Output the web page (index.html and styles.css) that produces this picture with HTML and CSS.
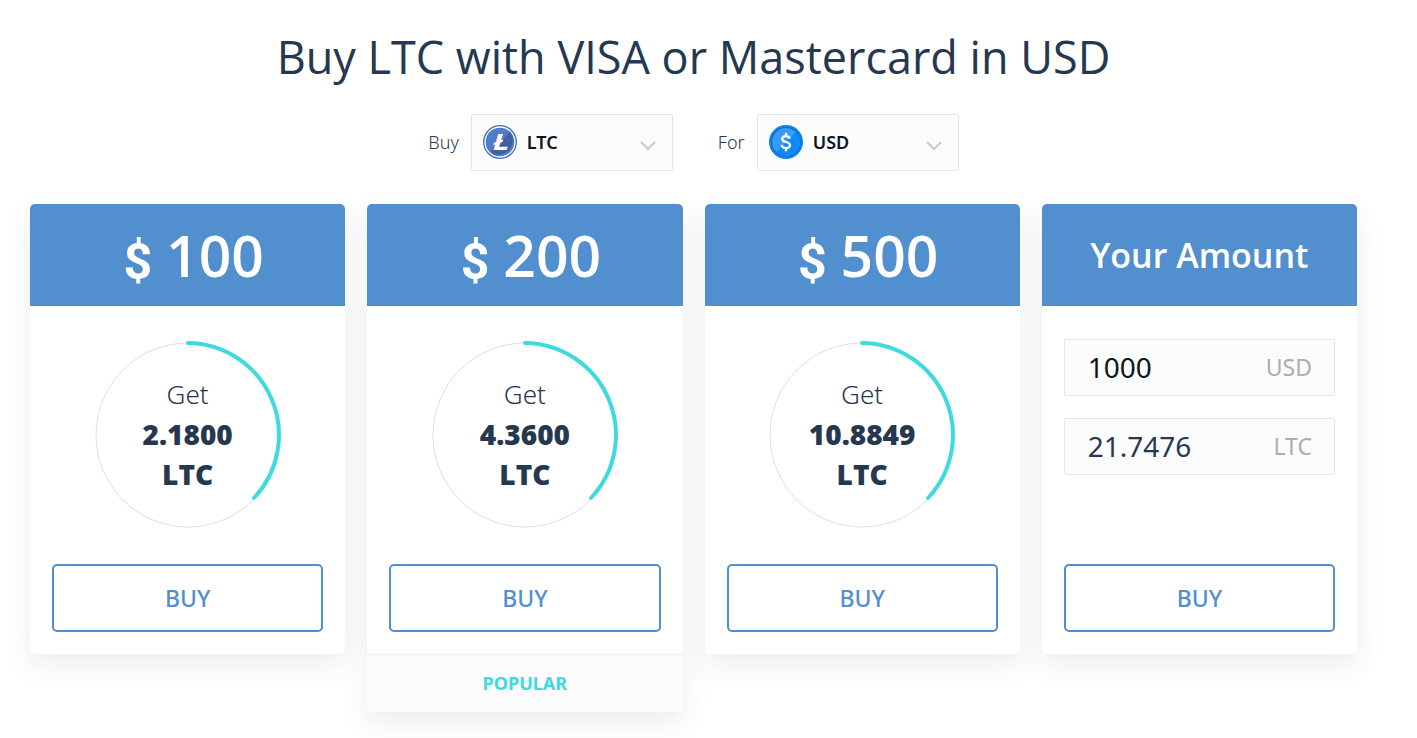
FILE: index.html
```html
<!DOCTYPE html>
<html lang="en">
<head>
    <meta charset="UTF-8">
    <meta name="viewport" content="width=device-width, initial-scale=1.0">
    <title>Buy LTC with VISA or Mastercard in USD</title>
    <link rel="stylesheet" href="styles.css">
</head>
<body>
    <main class="container">
        <h1>Buy LTC with VISA or Mastercard in USD</h1>

        <form class="filters">
            <div class="filter">
                <label for="buy">Buy</label>
                <div class="select-box">
                    <svg class="coin" viewBox="0 0 34 34" aria-hidden="true">
                        <circle cx="17" cy="17" r="17" fill="#466bb5"/>
                        <circle cx="17" cy="17" r="15" fill="#507ccd" stroke="#fff" stroke-width="1.3"/>
                        <path d="M27 7A14.3 14.3 0 0 1 7 27Z" fill="#40609f"/>
                        <path d="M15.200 9h4.800l-1.900 6.200 2.300-.9-.7 2.500-2.300.9-1.200 4h8.500l-.9 3.300H10.600l1.700-5.600-2 .8.7-2.500 2-.8Z" fill="#fff"/>
                    </svg>
                    <select id="buy">
                        <option>LTC</option>
                    </select>
                    <svg class="arrow" viewBox="0 0 16 10" aria-hidden="true">
                        <path d="M1 1 8 8l7-7"/>
                    </svg>
                </div>
            </div>
            <div class="filter">
                <label for="for">For</label>
                <div class="select-box">
                    <svg class="coin" viewBox="0 0 34 34" aria-hidden="true">
                        <circle cx="17" cy="17" r="17" fill="#0e85ec"/>
                        <circle cx="17" cy="17" r="14.500" fill="#369cf8" stroke="#0b6fce" stroke-width="1.200"/>
                        <path d="M27 7A14 14 0 0 1 7 27Z" fill="#118af5"/>
                        <path d="M20.900 13.800c-.5-1.900-2-2.700-3.900-2.700-2.300 0-3.800 1.100-3.800 2.800 0 4.200 7.800 2 7.800 6.200 0 1.900-1.600 3-4 3-2.200 0-3.900-1-4.300-3M17 8v3.200M17 23v3.200" fill="none" stroke="#fff" stroke-width="2.300"/>
                    </svg>
                    <select id="for">
                        <option>USD</option>
                    </select>
                    <svg class="arrow" viewBox="0 0 16 10" aria-hidden="true">
                        <path d="M1 1 8 8l7-7"/>
                    </svg>
                </div>
            </div>
        </form>

        <div class="cards">
            <section class="card">
                <h2 class="card-head"><span class="currency">$</span> 100</h2>
                <div class="card-body">
                    <div class="ring">
                        <svg viewBox="0 0 190 190" aria-hidden="true">
                            <circle class="track" cx="95" cy="95" r="92"/>
                            <path class="progress" d="M95 3A92 92 0 0 1 161 158"/>
                        </svg>
                        <p>Get <b>2.1800<br>LTC</b></p>
                    </div>
                    <button type="button" class="btn">BUY</button>
                </div>
            </section>

            <section class="card">
                <h2 class="card-head"><span class="currency">$</span> 200</h2>
                <div class="card-body">
                    <div class="ring">
                        <svg viewBox="0 0 190 190" aria-hidden="true">
                            <circle class="track" cx="95" cy="95" r="92"/>
                            <path class="progress" d="M95 3A92 92 0 0 1 161 158"/>
                        </svg>
                        <p>Get <b>4.3600<br>LTC</b></p>
                    </div>
                    <button type="button" class="btn">BUY</button>
                </div>
                <div class="card-foot">POPULAR</div>
            </section>

            <section class="card">
                <h2 class="card-head"><span class="currency">$</span> 500</h2>
                <div class="card-body">
                    <div class="ring">
                        <svg viewBox="0 0 190 190" aria-hidden="true">
                            <circle class="track" cx="95" cy="95" r="92"/>
                            <path class="progress" d="M95 3A92 92 0 0 1 161 158"/>
                        </svg>
                        <p>Get <b>10.8849<br>LTC</b></p>
                    </div>
                    <button type="button" class="btn">BUY</button>
                </div>
            </section>

            <section class="card">
                <h2 class="card-head card-head-text">Your Amount</h2>
                <div class="card-body">
                    <div class="amounts">
                        <div class="amount">
                            <input type="text" id="usd" class="amount-edit" value="1000">
                            <label for="usd">USD</label>
                        </div>
                        <div class="amount">
                            <input type="text" id="ltc" value="21.7476" readonly>
                            <label for="ltc">LTC</label>
                        </div>
                    </div>
                    <button type="button" class="btn">BUY</button>
                </div>
            </section>
        </div>
    </main>
</body>
</html>
```

FILE: styles.css
```css
* {
    margin: 0;
    padding: 0;
    box-sizing: border-box;
    font-family: 'Noto Sans', sans-serif;
}

body {
    background: #fff;
    color: #253850;
}

.container {
    padding: 24px 60px 26px 30px;
}

h1 {
    font-family: 'Open Sans', sans-serif;
    font-size: 45px;
    line-height: 66px;
    font-weight: 400;
    text-align: center;
}

/* Currency selects */
.filters {
    display: flex;
    justify-content: center;
    gap: 45px;
    margin: 24px 0 33px;
}

.filter {
    display: flex;
    align-items: center;
    gap: 12px;
}

.filter label {
    padding-bottom: 2px;
    font-size: 18px;
    font-weight: 300;
}

.select-box {
    position: relative;
    width: 202px;
}

.select-box select {
    display: block;
    width: 100%;
    height: 57px;
    padding: 0 0 2px 55px;
    appearance: none;
    background: #fcfcfc;
    border: 1px solid #e4e5e6;
    border-radius: 2px;
    color: #0c1522;
    font-size: 18px;
    font-weight: 600;
}

.coin,
.arrow {
    position: absolute;
    pointer-events: none;
}

.coin {
    top: 11px;
    left: 12px;
    width: 34px;
    height: 34px;
}

.arrow {
    top: 27px;
    right: 17px;
    width: 16px;
    height: 10px;
    fill: none;
    stroke: #c8cacd;
    stroke-width: 2;
}

/* Cards */
.cards {
    display: grid;
    grid-template-columns: repeat(4, 1fr);
    gap: 22px;
    align-items: start;
}

.card {
    background: #fff;
    border-radius: 5px;
    box-shadow: 0 11px 28px rgba(37, 56, 80, 0.09);
    overflow: hidden;
}

.card-head {
    display: flex;
    align-items: center;
    justify-content: center;
    gap: 14px;
    height: 102px;
    padding-left: 12px;
    background: #528fce;
    color: #fff;
    font-family: 'Open Sans', sans-serif;
    font-size: 57px;
    font-weight: 600;
}

.currency {
    font-family: 'Roboto', sans-serif;
    font-size: 50px;
    font-weight: 700;
    padding-top: 14px;
}

.card-head-text {
    padding-left: 0;
    font-size: 34px;
}

.card-body {
    padding: 33px 22px 22px;
}

.ring {
    display: grid;
    place-items: center;
    height: 192px;
    margin-bottom: 33px;
}

.ring svg,
.ring p {
    grid-area: 1 / 1;
}

.ring svg {
    width: 190px;
    height: 190px;
    fill: none;
}

.track {
    stroke: #dddfe1;
    stroke-width: 1;
}

.progress {
    stroke: #3edae0;
    stroke-width: 4;
    stroke-linecap: round;
}

.ring p {
    padding-bottom: 2px;
    font-size: 26px;
    line-height: 40px;
    font-weight: 300;
    text-align: center;
}

.ring b {
    display: block;
    font-family: 'Open Sans', sans-serif;
    font-size: 28px;
    font-weight: 800;
}

.amounts {
    display: flex;
    flex-direction: column;
    gap: 22px;
    height: 192px;
    margin-bottom: 33px;
}

.amount {
    display: flex;
    align-items: center;
    height: 57px;
    padding: 0 22px 2px 23px;
    background: #fcfcfc;
    border: 1px solid #e4e5e6;
    border-radius: 2px;
}

.amount input {
    flex: 1;
    min-width: 0;
    background: none;
    border: none;
    outline: none;
    color: #253850;
    font-size: 28px;
}

.amount .amount-edit {
    color: #0c1522;
}

.amount label {
    color: #a9aeb3;
    font-size: 23px;
}

.btn {
    display: block;
    width: 100%;
    height: 68px;
    background: #fff;
    border: 2px solid #528fce;
    border-radius: 5px;
    color: #528fce;
    font-size: 23px;
    font-weight: 500;
    cursor: pointer;
}

.card-foot {
    height: 58px;
    background: #fcfcfc;
    border-top: 1px solid #eeeff0;
    color: #3edae0;
    font-size: 18px;
    line-height: 57px;
    font-weight: 700;
    text-align: center;
}

@media (max-width: 1000px) {
    .cards {
        grid-template-columns: repeat(2, 1fr);
    }
}
```
